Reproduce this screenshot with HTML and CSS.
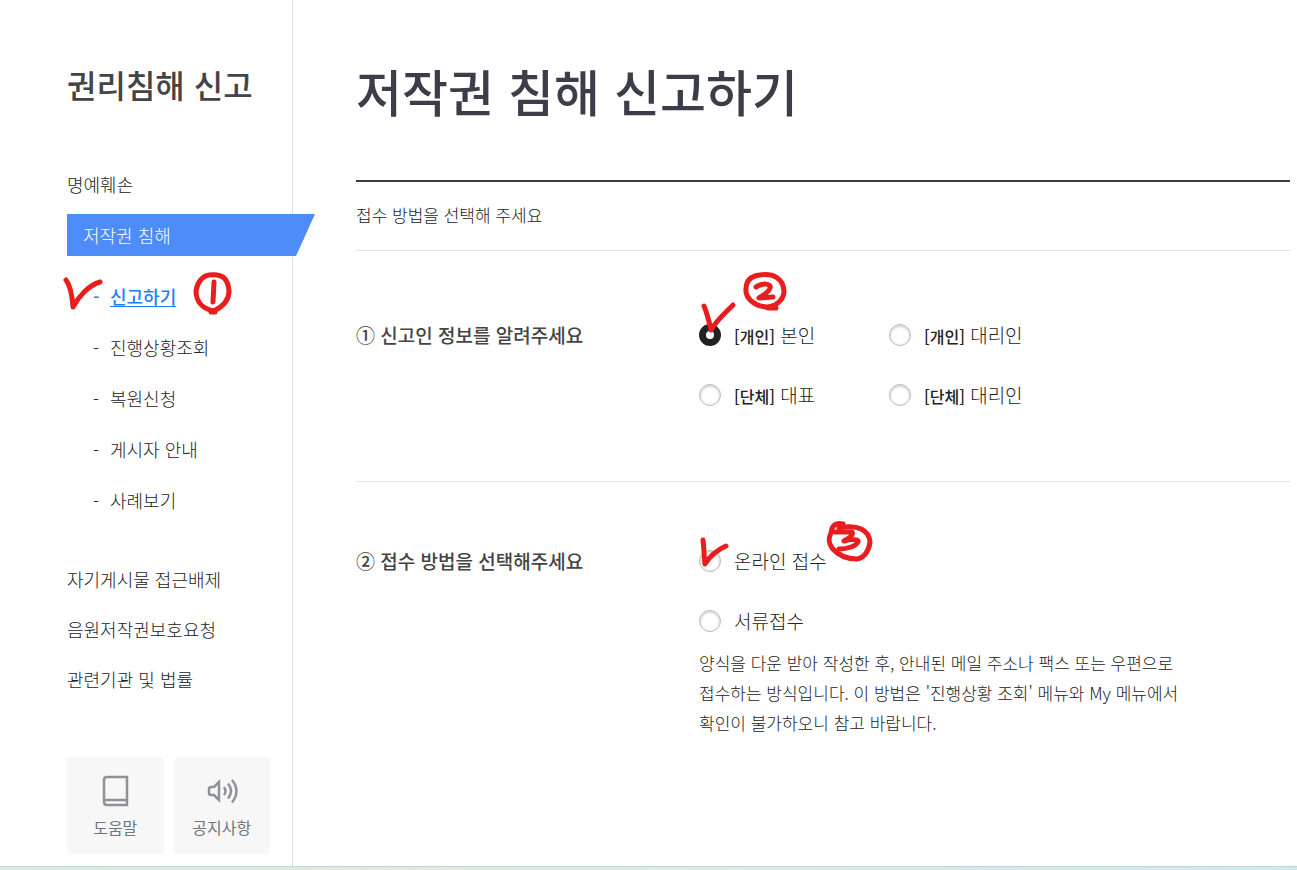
FILE: index.html
```html
<!DOCTYPE html>
<html lang="ko">
<head>
  <meta charset="UTF-8" />
  <meta name="viewport" content="width=device-width, initial-scale=1" />
  <title>저작권 침해 신고하기</title>
  <link rel="stylesheet" href="styles.css">
</head>
<body>

  <div class="page">
    <aside class="sidebar">
      <h2 class="sidebar-title">권리침해 신고</h2>

      <nav>
        <ul class="menu">
          <li><a href="#">명예훼손</a></li>
          <li class="active">
            <a class="current" href="#">저작권 침해</a>
            <ul class="submenu">
              <li class="on">
                <a href="#">신고하기</a>
                <svg class="mark mark-check1" width="40" height="34" viewBox="0 0 40 34" aria-hidden="true">
                  <path d="M3 3C7 8 9 16 10 30C16 19 26 8 37 5" />
                </svg>
                <svg class="mark mark-one" width="40" height="44" viewBox="0 0 40 44" aria-hidden="true">
                  <path d="M16 4C9 5 4 12 3 20C3 31 10 38 21 40C29 36 36 30 36 20C35 8 30 2 16 4M18 41H22" />
                  <path d="M21 11L20 31" />
                </svg>
              </li>
              <li><a href="#">진행상황조회</a></li>
              <li><a href="#">복원신청</a></li>
              <li><a href="#">게시자 안내</a></li>
              <li><a href="#">사례보기</a></li>
            </ul>
          </li>
          <li><a href="#">자기게시물 접근배제</a></li>
          <li><a href="#">음원저작권보호요청</a></li>
          <li><a href="#">관련기관 및 법률</a></li>
        </ul>
      </nav>

      <div class="quick">
        <a href="#">
          <svg width="32" height="32" viewBox="0 0 32 32" aria-hidden="true">
            <path d="M28 2H8Q5 2 5 5V27Q5 30 8 30H28ZM5 25H28" />
          </svg>
          도움말
        </a>
        <a href="#">
          <svg width="32" height="32" viewBox="0 0 32 32" aria-hidden="true">
            <path d="M13 7L8 12H5Q3 12 3 14V18Q3 20 5 20H8L13 25Z" />
            <path d="M18 12Q21 16 18 20M22 8.500Q28 16 22 23.500M26 5Q35 16 26 27.500" />
          </svg>
          공지사항
        </a>
      </div>
    </aside>

    <main class="content">
      <h1>저작권 침해 신고하기</h1>
      <p class="guide">접수 방법을 선택해 주세요</p>

      <form>
        <section class="row" role="radiogroup" aria-labelledby="q1">
          <h3 id="q1">① 신고인 정보를 알려주세요</h3>
          <div class="options two">
            <div class="option">
              <input type="radio" name="reporter" id="r1" checked />
              <label for="r1"><b>[개인]</b> 본인</label>
              <svg class="mark mark-check2" width="38" height="32" viewBox="0 0 38 32" aria-hidden="true">
                <path d="M4 5C7 12 9 20 11 29C16 20 25 12 33 4" />
              </svg>
              <svg class="mark mark-two" width="46" height="40" viewBox="0 0 46 40" aria-hidden="true">
                <path d="M18 3C8 4 4 9 4 17C3 27 14 35 26 35C37 33 42 26 42 19C41 6 31 1 18 3M26 36H34" />
                <path d="M14 15C19 11 30 11 28 16C27 20 22 23 17 26L31 25" />
              </svg>
            </div>
            <div class="option">
              <input type="radio" name="reporter" id="r2" />
              <label for="r2"><b>[개인]</b> 대리인</label>
            </div>
            <div class="option">
              <input type="radio" name="reporter" id="r3" />
              <label for="r3"><b>[단체]</b> 대표</label>
            </div>
            <div class="option">
              <input type="radio" name="reporter" id="r4" />
              <label for="r4"><b>[단체]</b> 대리인</label>
            </div>
          </div>
        </section>

        <section class="row method" role="radiogroup" aria-labelledby="q2">
          <h3 id="q2">② 접수 방법을 선택해주세요</h3>
          <div>
            <div class="options">
              <div class="option">
                <input type="radio" name="method" id="m1" />
                <label for="m1">온라인 접수</label>
                <svg class="mark mark-check3" width="32" height="32" viewBox="0 0 32 32" aria-hidden="true">
                  <path d="M5 4C6 12 6 20 7 28C12 20 19 14 28 10" />
                </svg>
                <svg class="mark mark-three" width="48" height="44" viewBox="0 0 48 44" aria-hidden="true">
                  <path d="M17 5C10 3 6 6 5 14C2 19 3 25 6 29C12 36 21 40 31 40C38 39 43 32 44 23C43 11 32 5 13 9" />
                  <path d="M9 13L26 13C28 16 23 19 18 22C25 20 33 20 32 23C30 27 22 30 13 30" />
                </svg>
              </div>
              <div class="option">
                <input type="radio" name="method" id="m2" aria-describedby="m2desc" />
                <label for="m2">서류접수</label>
              </div>
            </div>
            <p class="desc" id="m2desc">
              양식을 다운 받아 작성한 후, 안내된 메일 주소나 팩스 또는 우편으로<br />
              접수하는 방식입니다. 이 방법은 '진행상황 조회' 메뉴와 My 메뉴에서<br />
              확인이 불가하오니 참고 바랍니다.
            </p>
          </div>
        </section>
      </form>
    </main>
  </div>
  <div class="bottom-bar"></div>

</body>
</html>
```
FILE: styles.css
```css
* {
  box-sizing: border-box;
  margin: 0;
  padding: 0;
}
body {
  display: flex;
  flex-direction: column;
  min-height: 100vh;
  font-family: "Noto Sans CJK KR", sans-serif;
  font-size: 18px;
  font-weight: 300;
  color: #222;
  background: #fff;
}
ul {
  list-style: none;
}
a {
  color: inherit;
  text-decoration: none;
}
.page {
  display: flex;
  flex: 1;
}

/* sidebar */
.sidebar {
  flex: none;
  width: 293px;
  padding: 64px 22px 12px 67px;
  border-right: 1px solid #ddd;
}
.sidebar-title {
  margin-bottom: 59px;
  font-size: 32px;
  line-height: 40px;
  font-weight: 500;
  color: #444;
}
.menu {
  display: flex;
  flex-direction: column;
  gap: 8px;
  line-height: 42px;
}
.menu .current {
  display: block;
  width: 248px;
  margin-top: 1px;
  padding-left: 16px;
  color: #fff;
  background: #4e8cf8;
  clip-path: polygon(0 0, 100% 0, 229px 100%, 0 100%);
}
.submenu {
  margin: 15px 0 24px 26px;
  line-height: 51px;
}
.submenu li {
  position: relative;
  display: flex;
}
.submenu li::before {
  content: "-";
  width: 17px;
}
.submenu .on {
  color: #2080f8;
  font-weight: 500;
}
.submenu .on a {
  text-decoration: underline;
  text-underline-offset: 2px;
}
.quick {
  display: flex;
  gap: 10px;
  margin-top: 57px;
}
.quick a {
  display: flex;
  flex: 1;
  flex-direction: column;
  align-items: center;
  gap: 8px;
  padding: 18px 0 15px;
  border-radius: 4px;
  background: #f7f7f7;
  color: #70757d;
  font-size: 16px;
  line-height: 24px;
  font-weight: 400;
}
.quick svg {
  fill: none;
  stroke: #8e9297;
  stroke-width: 2.5;
}

/* content */
.content {
  flex: 1;
  padding: 60px 7px 12px 63px;
}
h1 {
  padding-bottom: 60px;
  border-bottom: 2px solid #3a3c47;
  font-size: 50px;
  line-height: 60px;
  font-weight: 500;
  color: #3b3e49;
}
.guide {
  padding: 18px 0 20px;
  border-bottom: 1px solid #e3e3e3;
  font-size: 17px;
  line-height: 30px;
}
.row {
  display: grid;
  grid-template-columns: 343px 1fr;
  padding: 72px 0 74px;
  border-bottom: 1px solid #e3e3e3;
  line-height: 24px;
}
.row h3 {
  font-size: 19px;
  font-weight: 500;
  color: #444;
}
.row.method {
  padding: 67px 0 0;
  border-bottom: none;
}
.options {
  display: grid;
  gap: 36px 0;
}
.options.two {
  grid-template-columns: 190px 1fr;
}
.option {
  position: relative;
  display: flex;
  align-items: center;
  gap: 13px;
  height: 24px;
  font-size: 19px;
}
.option b {
  font-size: 16px;
  font-weight: 500;
}
.option input {
  appearance: none;
  width: 22px;
  height: 22px;
  border: 1px solid #bbb;
  border-radius: 50%;
  background: #fff;
  box-shadow: inset 0 1px 3px rgba(0, 0, 0, 0.25);
}
.option input:checked {
  border: 7px solid #222;
  box-shadow: none;
}
.desc {
  margin-top: 15px;
  font-size: 17px;
  line-height: 30px;
}

/* red pen marks */
.mark {
  position: absolute;
  fill: none;
  stroke: #e81e1e;
  stroke-width: 5;
  stroke-linecap: round;
  stroke-linejoin: round;
  pointer-events: none;
}
.mark-check1 {
  left: -30px;
  top: 6px;
}
.mark-one {
  left: 100px;
  top: 0;
}
.mark-check2 {
  left: 1px;
  top: -22px;
}
.mark-two {
  left: 43px;
  top: -51px;
}
.mark-check3 {
  left: -1px;
  top: -13px;
}
.mark-three {
  left: 127px;
  top: -30px;
}

.bottom-bar {
  height: 4px;
  border-top: 1px solid #bfd8d6;
  background: linear-gradient(90deg, #d8ece4, #dfebdc 30%, #d8ece6 60%, #cdebee);
}
```
